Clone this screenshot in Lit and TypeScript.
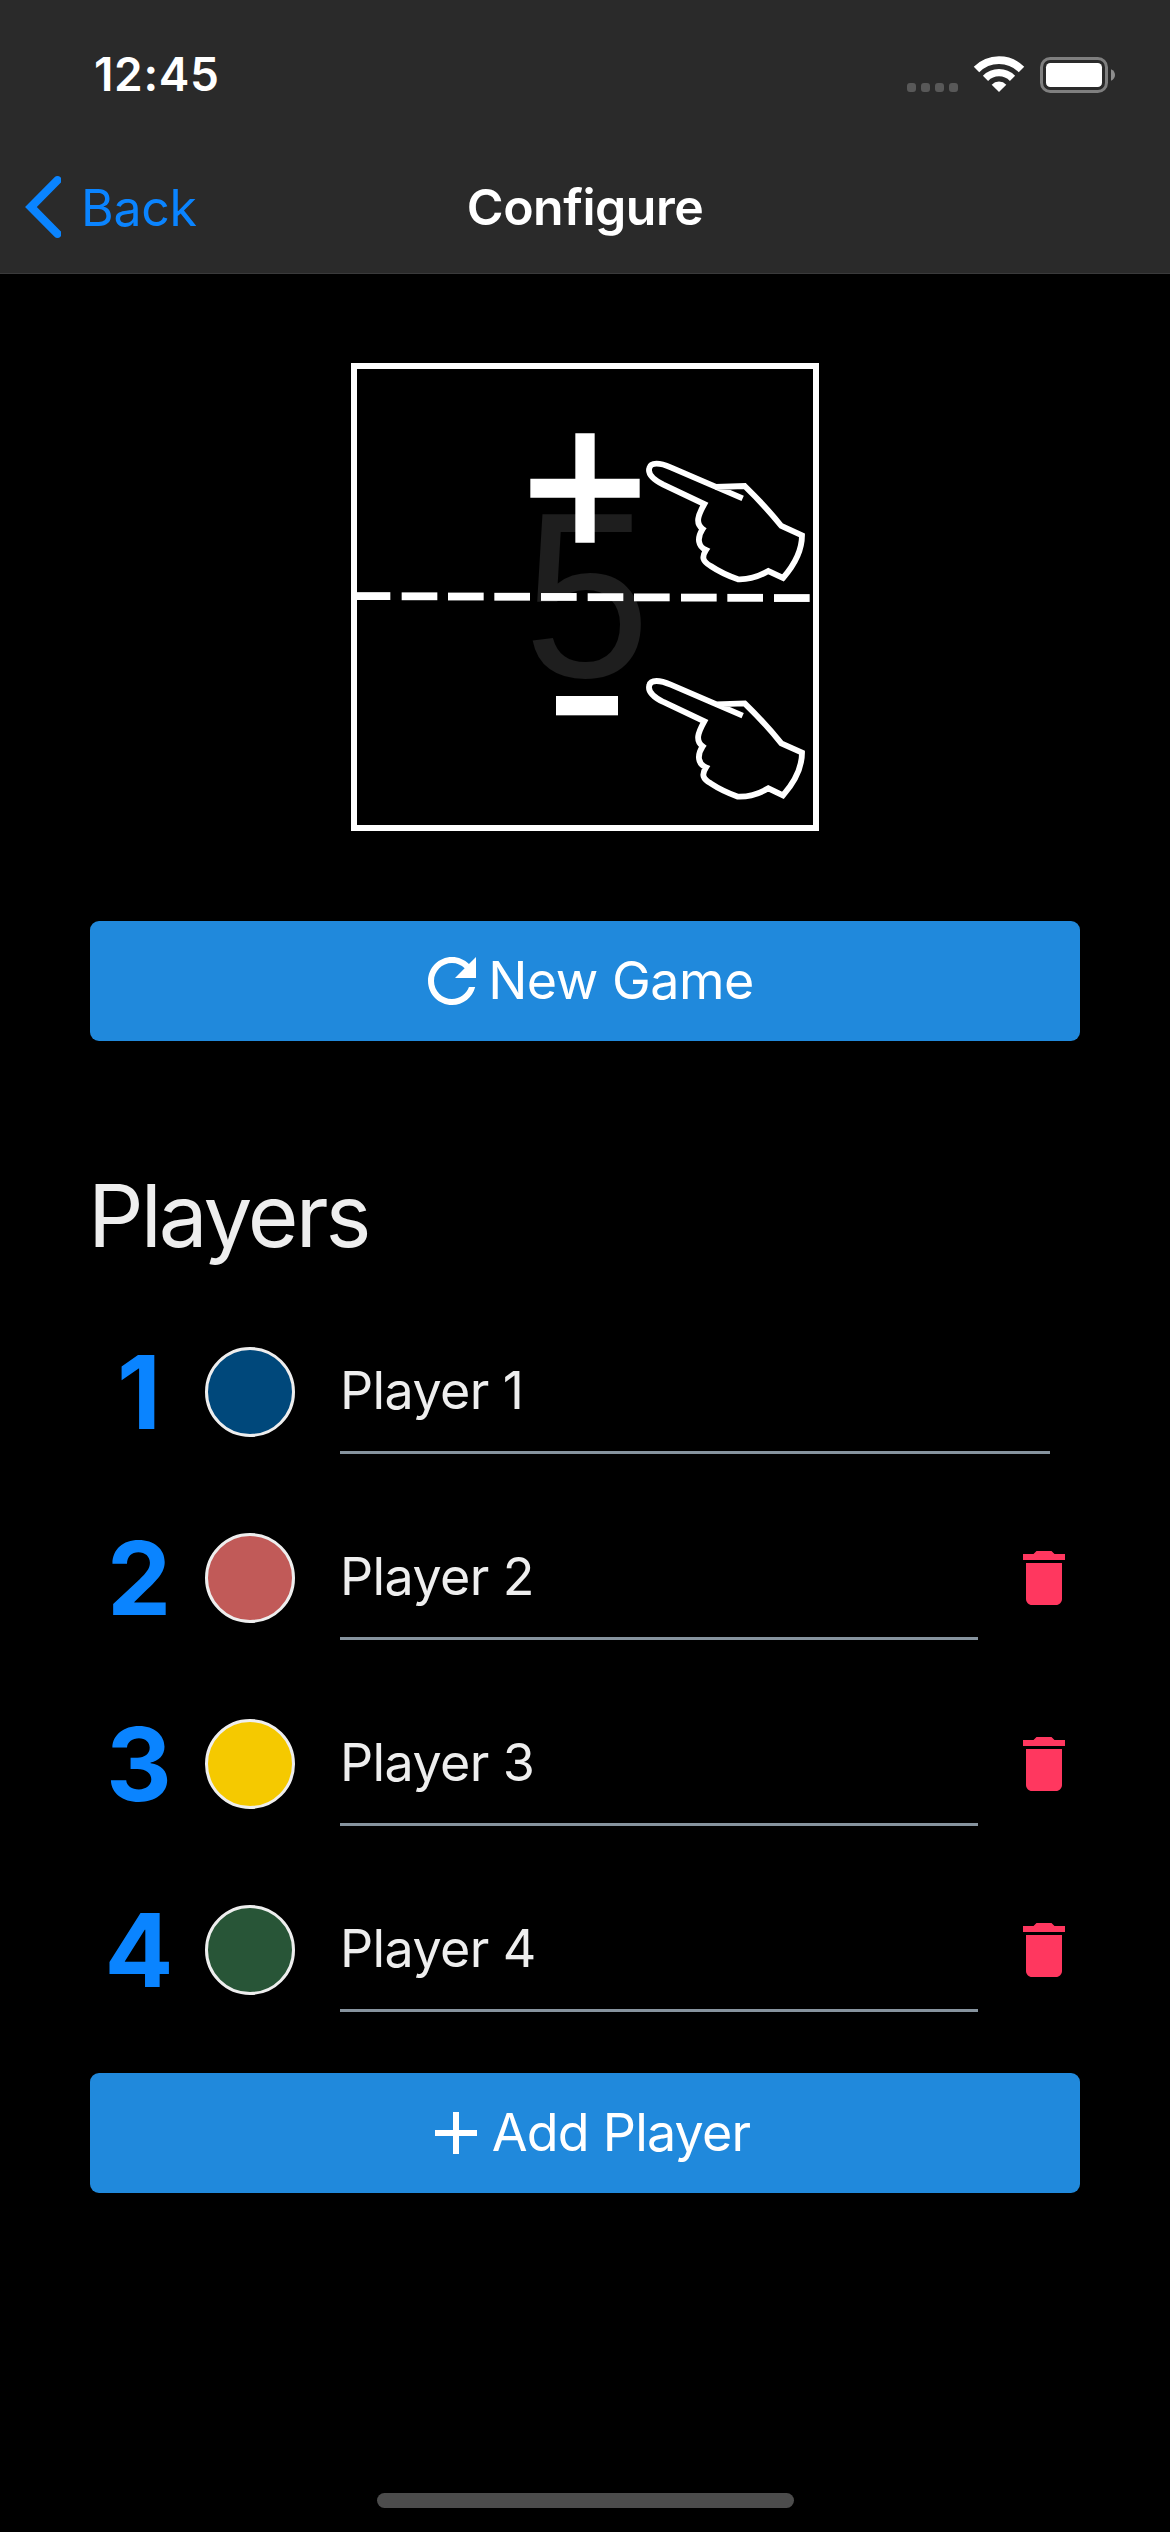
import { LitElement, html, css, svg, nothing } from "lit";

interface Player {
  name: string;
  color: string;
}

const HAND =
  "M1208 445 L992 352 C960 338 932 336 928 354 C922 374 944 391 970 404 L1093 462 " +
  "C1074 496 1065 520 1088 537 C1070 564 1074 590 1098 600 C1084 622 1088 634 1112 648 " +
  "C1136 664 1166 678 1194 688 C1222 689 1256 680 1285 663 L1329 684 " +
  "C1364 644 1386 600 1386 556 L1324 528 C1290 486 1250 443 1214 408 L1126 411";

class TapGuide extends LitElement {
  static styles = css`
    :host {
      display: block;
      width: 468px;
      height: 468px;
    }
    .art {
      display: block;
      width: 100%;
      height: 100%;
    }
    .score {
      font-family: "Liberation Sans", Arial, sans-serif;
      font-size: 706px;
      fill: #1e1e1e;
    }
  `;

  render() {
    const dashes = [51, 185, 324, 463, 603, 743, 882, 1023, 1162, 1302];
    return html`
      <svg class="art" viewBox="33 39 1404 1404">
        <rect x="42" y="48" width="1386" height="1386" fill="none" stroke="#fff" stroke-width="18" />
        <text class="score" transform="translate(741 981) scale(0.97 1)" text-anchor="middle">5</text>
        <path d="M706 250h58v136h135v57H764v135h-58V443H571v-57h135z" fill="#fff" />
        <rect x="648" y="1038" width="186" height="58" fill="#fff" />
        ${dashes.map(
          (x, i) => svg`<rect x=${x} y=${726.5 + i * 0.65} width=${i ? 107 : 100} height="23.5" fill="#fff" />`
        )}
        <path d=${HAND} fill="none" stroke="#fff" stroke-width="17.5" />
        <path d=${HAND} fill="none" stroke="#fff" stroke-width="17.5" transform="translate(0 652)" />
      </svg>
    `;
  }
}
customElements.define("tap-guide", TapGuide);

class AppRoot extends LitElement {
  static styles = css`
    :host {
      display: block;
      background: #000;
      font-family: Inter, "Liberation Sans", sans-serif;
      color: #eee;
    }
    .screen {
      display: flex;
      flex-direction: column;
      box-sizing: border-box;
      width: 1170px;
      height: 2532px;
      background: #000;
      overflow: hidden;
    }
    .header {
      flex: none;
      box-sizing: border-box;
      height: 274px;
      background: #2a2a2a;
      border-bottom: 1px solid #3a3a3b;
    }
    .status {
      display: flex;
      align-items: center;
      justify-content: space-between;
      box-sizing: border-box;
      height: 141px;
      padding: 7px 54px 0 94px;
      color: #fff;
    }
    .time {
      font-size: 46px;
      font-weight: 600;
      line-height: 56px;
      letter-spacing: 0.65px;
    }
    .indicators {
      display: block;
      width: 209px;
      height: 39px;
    }
    .nav {
      display: grid;
      grid-template-columns: 1fr auto 1fr;
      align-items: center;
      height: 132px;
      padding: 0 25px;
    }
    .back {
      display: flex;
      align-items: center;
      gap: 20px;
      color: #0a84ff;
      font-size: 50px;
      line-height: 62px;
      letter-spacing: -0.3px;
    }
    .chevron {
      display: block;
      width: 36px;
      height: 62px;
    }
    .back-label {
      padding-top: 2px;
    }
    .title {
      margin: 0;
      color: #fff;
      font-size: 50px;
      font-weight: 600;
      line-height: 62px;
      letter-spacing: -0.5px;
    }
    .content {
      flex: 1;
      display: flex;
      flex-direction: column;
      padding: 89px 90px 0;
    }
    .guide {
      align-self: center;
      margin-bottom: 90px;
    }
    .button {
      display: flex;
      align-items: center;
      justify-content: center;
      flex: none;
      width: 100%;
      height: 120px;
      padding: 0;
      border: 0;
      border-radius: 9px;
      background: #2089dc;
      color: #fff;
      font-family: inherit;
      font-size: 52px;
      line-height: 64px;
      letter-spacing: -0.5px;
    }
    .add {
      margin-top: 30px;
      letter-spacing: -0.8px;
    }
    .icon {
      display: block;
      flex: none;
      width: 72px;
      height: 72px;
    }
    .heading {
      margin: 122px 0 30px -2px;
      font-size: 87px;
      font-weight: 400;
      line-height: 106px;
      letter-spacing: -2.9px;
    }
    .row {
      display: flex;
      align-items: center;
      height: 186px;
    }
    .number {
      width: 98px;
      margin-right: 17px;
      text-align: center;
      color: #0a84ff;
      font-size: 102px;
      font-weight: 700;
      line-height: 124px;
    }
    .swatch {
      box-sizing: border-box;
      width: 90px;
      height: 90px;
      margin-right: 45px;
      border: 3px solid #eee;
      border-radius: 50%;
    }
    .field {
      flex: 1;
      box-sizing: border-box;
      height: 124px;
      border-bottom: 3px solid #86939e;
      font-size: 52px;
      line-height: 122px;
      letter-spacing: -0.6px;
    }
    .field.last {
      margin-right: 30px;
    }
    .trash {
      margin-left: 30px;
      color: #ff375f;
    }
    .home {
      align-self: center;
      flex: none;
      width: 417px;
      height: 15px;
      margin-bottom: 24px;
      border-radius: 8px;
      background: #4c4c4c;
    }
  `;

  private players: Player[] = [
    { name: "Player 1", color: "#00487b" },
    { name: "Player 2", color: "#c15a58" },
    { name: "Player 3", color: "#f5c900" },
    { name: "Player 4", color: "#285537" },
  ];

  private icon(d: string, extra = "") {
    return html`<svg class="icon ${extra}" viewBox="0 0 24 24" fill="currentColor"><path d=${d} /></svg>`;
  }

  private row(p: Player, i: number) {
    const removable = i > 0;
    return html`
      <div class="row">
        <div class="number">${i + 1}</div>
        <div class="swatch" style="background:${p.color}"></div>
        <div class="field ${removable ? "" : "last"}">${p.name}</div>
        ${removable
          ? this.icon(
              "M6 19c0 1.1.9 2 2 2h8c1.1 0 2-.9 2-2V7H6v12zM19 4h-3.5l-1-1h-5l-1 1H5v2h14V4z",
              "trash"
            )
          : nothing}
      </div>
    `;
  }

  render() {
    return html`
      <div class="screen">
        <div class="header">
          <div class="status">
            <span class="time">12:45</span>
            <svg class="indicators" viewBox="21 42 627 117">
              ${[21, 63, 105, 147].map(
                (x) => svg`<rect x=${x} y="126" width="27" height="27" rx="9" fill="#585858" />`
              )}
              <g fill="none" stroke="#fff">
                <path d="M229.5 85.5a94.5 94.5 0 0 1 135 0" stroke-width="23" />
                <path d="M256.5 112a57 57 0 0 1 81 0" stroke-width="22" />
              </g>
              <path d="M297 153l-22-22a31 31 0 0 1 44 0z" fill="#fff" />
              <rect x="424.5" y="52.5" width="195" height="99" rx="26" fill="none" stroke="#7f7f7f" stroke-width="9" />
              <rect x="438" y="66" width="168" height="72" rx="13" fill="#fff" />
              <path d="M633 85c16 6 16 28 0 34z" fill="#8e8e8e" />
            </svg>
          </div>
          <div class="nav">
            <div class="back">
              <svg class="chevron" viewBox="0 0 36 62">
                <path d="M32.5 4.2L5.9 31l26.6 26.8" fill="none" stroke="#0a84ff" stroke-width="8.3" stroke-linecap="round" />
              </svg>
              <span class="back-label">Back</span>
            </div>
            <h1 class="title">Configure</h1>
          </div>
        </div>
        <div class="content">
          <tap-guide class="guide"></tap-guide>
          <button class="button">
            ${this.icon(
              "M17.65 6.35C16.2 4.9 14.21 4 12 4c-4.42 0-7.99 3.58-7.99 8s3.57 8 7.99 8c3.73 0 6.84-2.55 7.73-6h-2.08c-.82 2.33-3.04 4-5.65 4-3.31 0-6-2.69-6-6s2.69-6 6-6c1.66 0 3.14.69 4.22 1.78L13 11h7V4l-2.35 2.35z"
            )}
            <span>New Game</span>
          </button>
          <h2 class="heading">Players</h2>
          ${this.players.map((p, i) => this.row(p, i))}
          <button class="button add">
            ${this.icon("M19 13h-6v6h-2v-6H5v-2h6V5h2v6h6v2z")}
            <span>Add Player</span>
          </button>
        </div>
        <div class="home"></div>
      </div>
    `;
  }
}
customElements.define("app-root", AppRoot);
